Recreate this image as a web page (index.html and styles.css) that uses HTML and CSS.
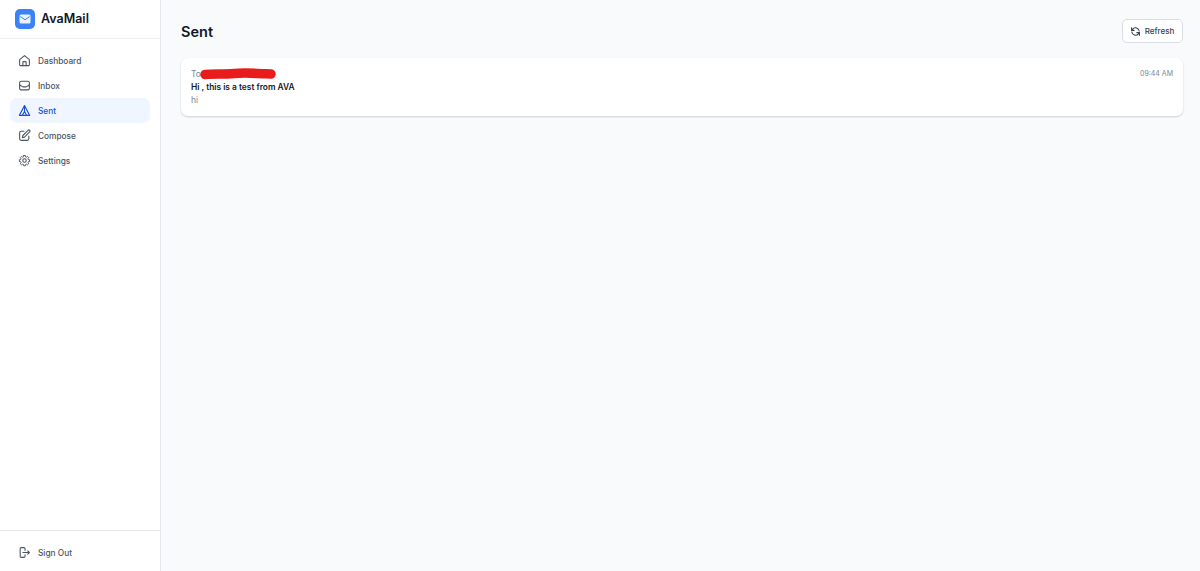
FILE: index.html
```html
<!DOCTYPE html>
<html lang="en">
<head>
  <meta charset="UTF-8" />
  <meta name="viewport" content="width=device-width, initial-scale=1.0" />
  <title>AvaMail - Sent</title>
  <link rel="stylesheet" href="styles.css">
</head>
<body>
  <div class="app">
    <aside class="sidebar">
      <div class="brand">
        <span class="brand-logo">
          <svg width="12" height="10" viewBox="0 0 24 20"><rect x="1" y="1" width="22" height="18" rx="3" fill="#eaf1fe"/><path d="M2.500 5l9.500 6.500L21.500 5" fill="none" stroke="#3b82f6" stroke-width="2"/></svg>
        </span>
        <span class="brand-name">AvaMail</span>
      </div>
      <nav class="nav">
        <a class="nav-item">
          <svg class="icon" viewBox="0 0 24 24"><path d="M3 10.500L12 3l9 7.500V20a1.500 1.500 0 0 1-1.500 1.500h-15A1.500 1.500 0 0 1 3 20z"/><path d="M9 21.500V15a1 1 0 0 1 1-1h4a1 1 0 0 1 1 1v6.500"/></svg>
          Dashboard
        </a>
        <a class="nav-item">
          <svg class="icon" viewBox="0 0 24 24"><rect x="3" y="4" width="18" height="16" rx="3"/><path d="M3 11l6 3.500h6l6-3.500"/></svg>
          Inbox
        </a>
        <a class="nav-item active">
          <svg class="icon" viewBox="0 0 24 24"><path d="M12 3L2.500 21h19z"/><path d="M12 3v11M8 21l4-7 4 7"/></svg>
          Sent
        </a>
        <a class="nav-item">
          <svg class="icon" viewBox="0 0 24 24"><path d="M11 4H6a3 3 0 0 0-3 3v11a3 3 0 0 0 3 3h11a3 3 0 0 0 3-3v-5"/><path d="M18.500 2.500a2.100 2.100 0 0 1 3 3L12 15l-4 1 1-4z"/></svg>
          Compose
        </a>
        <a class="nav-item">
          <svg class="icon" viewBox="0 0 24 24"><path d="M10.300 3h3.400l.5 2.600 1.700.7 2.200-1.500 2.400 2.400-1.500 2.200.7 1.700 2.600.5v3.400l-2.600.5-.7 1.700 1.500 2.200-2.400 2.400-2.200-1.500-1.700.7-.5 2.600h-3.400l-.5-2.600-1.700-.7-2.200 1.500-2.400-2.400 1.500-2.200-.7-1.700-2.600-.5v-3.400l2.600-.5.7-1.700-1.500-2.200 2.400-2.400 2.200 1.500 1.700-.7z" transform="translate(12 12) scale(.92) translate(-12 -13)"/><circle cx="12" cy="12" r="3.200"/></svg>
          Settings
        </a>
      </nav>
      <div class="sidebar-foot">
        <a class="nav-item">
          <svg class="icon" viewBox="0 0 24 24"><path d="M13 16v3a2 2 0 0 1-2 2H6a2 2 0 0 1-2-2V5a2 2 0 0 1 2-2h5a2 2 0 0 1 2 2v3"/><path d="M9 12h12M18 9l3 3-3 3"/></svg>
          Sign Out
        </a>
      </div>
    </aside>

    <main class="main">
      <header class="page-head">
        <h1>Sent</h1>
        <button class="refresh">
          <svg class="icon small" viewBox="0 0 24 24"><path d="M20 11a8 8 0 0 0-14.300-4L3.500 9.500"/><path d="M3.500 4v5.500H9"/><path d="M4 13a8 8 0 0 0 14.300 4l2.200-2.500"/><path d="M20.500 20v-5.500H15"/></svg>
          Refresh
        </button>
      </header>
      <div class="mail-card">
        <div class="mail-top">
          <div class="mail-to">
            To
            <svg class="scribble" width="76" height="12" viewBox="0 0 76 12"><path d="M5 6.500C14 5.500 24 6.500 34 5.500S50 5 58 5.500 66 5.500 71 6" fill="none" stroke="#e81c1c" stroke-width="9.500" stroke-linecap="round"/></svg>
          </div>
          <div class="mail-time">09:44 AM</div>
        </div>
        <div class="mail-subject">Hi , this is a test from AVA</div>
        <div class="mail-body">hi</div>
      </div>
    </main>
  </div>
</body>
</html>
```

FILE: styles.css
```css
* {
  box-sizing: border-box;
}

body {
  margin: 0;
  font-family: Inter, "Noto Sans", sans-serif;
  background: #f8fafc;
  color: #0f172a;
}

.app {
  display: flex;
  height: 571px;
}

.sidebar {
  width: 161px;
  flex-shrink: 0;
  display: flex;
  flex-direction: column;
  background: #ffffff;
  border-right: 1px solid #e5e7eb;
}

.brand {
  height: 39px;
  display: flex;
  align-items: center;
  gap: 6px;
  padding: 0 15px 1px;
  border-bottom: 1px solid #eceef2;
}

.brand-logo {
  width: 20px;
  height: 20px;
  border-radius: 5px;
  background: #3b82f6;
  display: flex;
  align-items: center;
  justify-content: center;
}

.brand-name {
  font-size: 12.500px;
  font-weight: 600;
  color: #111827;
}

.nav {
  flex: 1;
  padding: 9px 10px;
}

.nav-item {
  height: 25px;
  display: flex;
  align-items: center;
  gap: 7px;
  padding: 0 8px;
  border-radius: 7px;
  font-size: 8.300px;
  font-weight: 500;
  color: #4b5563;
}

.nav-item.active {
  background: #eff6ff;
  color: #1d4ed8;
}

.icon {
  width: 13px;
  height: 13px;
  flex-shrink: 0;
  fill: none;
  stroke: currentColor;
  stroke-width: 2;
  stroke-linecap: round;
  stroke-linejoin: round;
}

.icon.small {
  width: 11px;
  height: 11px;
  stroke-width: 2.400;
}

.sidebar-foot {
  height: 41px;
  padding: 9px 10px 0;
  border-top: 1px solid #e5e7eb;
}

.main {
  flex: 1;
  padding: 0 17px 0 20px;
}

.page-head {
  height: 58px;
  display: flex;
  align-items: flex-end;
  justify-content: space-between;
  padding-bottom: 15px;
}

.page-head h1 {
  margin: 0;
  font-size: 14.500px;
  line-height: 22px;
  font-weight: 600;
  color: #0f172a;
}

.refresh {
  width: 61px;
  height: 24px;
  display: flex;
  align-items: center;
  justify-content: center;
  gap: 4px;
  padding: 0 1px 0 0;
  font-family: inherit;
  font-size: 8px;
  font-weight: 500;
  color: #374151;
  background: #ffffff;
  border: 1px solid #d9dde3;
  border-radius: 5px;
}

.mail-card {
  height: 58px;
  padding: 10px 10px 0;
  background: #ffffff;
  border-radius: 7px;
  box-shadow: 0 1px 2px rgba(15, 23, 42, 0.18);
}

.mail-top {
  display: flex;
  justify-content: space-between;
  font-size: 7px;
  line-height: 12px;
  color: #7d8592;
}

.mail-to {
  position: relative;
  font-size: 8.500px;
}

/* red marker scrawl over the address */
.scribble {
  position: absolute;
  left: 9px;
  top: 0;
}

.mail-subject {
  margin-top: 1px;
  font-size: 8.400px;
  line-height: 13px;
  font-weight: 600;
  color: #111827;
}

.mail-body {
  font-size: 8.500px;
  line-height: 13px;
  color: #7d8592;
}
```
